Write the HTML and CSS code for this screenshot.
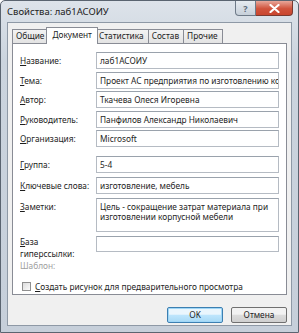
FILE: index.html
```html
<!DOCTYPE html>
<html lang="ru">

<head>
    <meta charset="UTF-8">
    <title>Свойства: лаб1АСОИУ</title>
    <link rel="stylesheet" href="styles.css">
</head>

<body>
    <div class="window">
        <div class="titlebar">
            <span class="title">Свойства: лаб1АСОИУ</span>
            <div class="caption-btns">
                <div class="cbtn help">?</div>
                <div class="cbtn close">
                    <svg width="11" height="9" viewBox="0 0 11 9">
                        <path d="M1.5 1 L9.5 8 M9.5 1 L1.5 8" stroke="#fff" stroke-width="2.2" stroke-linecap="round" />
                    </svg>
                </div>
            </div>
        </div>
        <div class="client">
            <div class="tabs">
                <div class="tab">Общие</div>
                <div class="tab active">Документ</div>
                <div class="tab">Статистика</div>
                <div class="tab">Состав</div>
                <div class="tab">Прочие</div>
            </div>
            <div class="panel">
                <div class="group">
                    <label class="lbl"><u>Н</u>азвание:</label>
                    <div class="field">лаб1АСОИУ</div>
                    <label class="lbl"><u>Т</u>ема:</label>
                    <div class="field">Проект АС предприятия по изготовлению корпусной мебели</div>
                    <label class="lbl"><u>А</u>втор:</label>
                    <div class="field">Ткачева Олеся Игоревна</div>
                    <label class="lbl"><u>Р</u>уководитель:</label>
                    <div class="field">Панфилов Александр Николаевич</div>
                    <label class="lbl"><u>О</u>рганизация:</label>
                    <div class="field">Microsoft</div>
                </div>
                <div class="group second">
                    <label class="lbl"><u>Г</u>руппа:</label>
                    <div class="field">5-4</div>
                    <label class="lbl"><u>К</u>лючевые слова:</label>
                    <div class="field">изготовление, мебель</div>
                    <label class="lbl top"><u>З</u>аметки:</label>
                    <div class="field notes">Цель - сокращение затрат материала при изготовлении корпусной мебели</div>
                    <label class="lbl two"><u>Б</u>аза<br>гиперссылки:</label>
                    <div class="field link"></div>
                    <label class="lbl disabled">Шаблон:</label>
                    <div></div>
                </div>
                <div class="check">
                    <span class="box"></span>
                    <span><u>С</u>оздать рисунок для предварительного просмотра</span>
                </div>
            </div>
            <div class="buttons">
                <div class="btn default">OK</div>
                <div class="btn">Отмена</div>
            </div>
        </div>
    </div>
</body>

</html>
```

FILE: styles.css
```css
* {
    margin: 0;
    padding: 0;
    box-sizing: border-box;
}

body {
    width: 299px;
    height: 333px;
    background: #fff;
    font-family: "Noto Sans", "Open Sans", sans-serif;
    font-size: 8.3px;
    color: #1e1e1e;
}

.window {
    width: 299px;
    height: 333px;
    border: 1px solid #5a6470;
    border-radius: 5px 5px 0 0;
    background: linear-gradient(#dde3ea, #cbd4de 60px, #c6cfda);
    padding: 0 6px 6px 6px;
    display: flex;
    flex-direction: column;
}

.titlebar {
    height: 21px;
    display: flex;
    justify-content: space-between;
    align-items: flex-start;
}

.title {
    font-size: 9.5px;
    line-height: 21px;
    color: #222;
}

.caption-btns {
    display: flex;
    margin-right: -1px;
}

.cbtn {
    height: 15px;
    border: 1px solid #6e7a88;
    border-top: none;
    display: flex;
    align-items: center;
    justify-content: center;
}

.help {
    width: 21px;
    border-radius: 0 0 0 4px;
    background: linear-gradient(#e6ebf0, #c7d0da);
    color: #5d6a78;
    font-weight: bold;
    font-size: 9px;
}

.close {
    width: 37px;
    border-left: none;
    border-color: #7a3a30;
    border-radius: 0 0 4px 0;
    background: linear-gradient(#e8a79a, #d0533c 55%, #c9462f);
}

.client {
    flex: 1;
    background: #f0f0f0;
    border: 1px solid #8e99a6;
    padding: 4px 4px 0 4px;
}

.tabs {
    display: flex;
    height: 16px;
    align-items: flex-end;
    padding-left: 1px;
}

.tab {
    height: 14px;
    padding: 0 4px 0 3px;
    border: 1px solid #898c95;
    border-bottom: none;
    margin-left: -1px;
    background: linear-gradient(#f3f3f3, #e3e3e3);
    line-height: 12px;
}

.tab.active {
    height: 17px;
    background: #fff;
    position: relative;
    z-index: 1;
    padding: 0 5px;
    margin: 0 -2px -1px -3px;
    line-height: 14px;
}

.panel {
    height: 252px;
    background: #fff;
    border: 1px solid #898c95;
    padding: 8px 7px 0 7px;
}

.group {
    display: grid;
    grid-template-columns: 76px 1fr;
    row-gap: 2.5px;
    align-items: center;
}

.group.second {
    margin-top: 9px;
    row-gap: 4px;
}

.lbl {
    line-height: 11px;
}

.lbl.top {
    align-self: start;
    padding-top: 3px;
}

.lbl.two {
    line-height: 12px;
    align-self: start;
}

.lbl.disabled {
    color: #a0a0a0;
    line-height: 12px;
    margin-top: -4px;
}

.field {
    height: 17px;
    border: 1px solid #b5bbc3;
    border-top-color: #9aa2ac;
    padding: 0 3px;
    line-height: 15px;
    white-space: nowrap;
    overflow: hidden;
}

.field.notes {
    height: 34px;
    white-space: normal;
    line-height: 10px;
    padding-top: 3px;
}

.field.link {
    height: 16px;
    align-self: start;
}

.check {
    display: flex;
    align-items: center;
    gap: 4px;
    margin-top: 9px;
    padding-left: 2px;
}

.box {
    width: 9px;
    height: 9px;
    border: 1px solid #8f8f8f;
    background: linear-gradient(135deg, #dcdcdc, #fbfbfb);
}

.buttons {
    display: flex;
    justify-content: flex-end;
    gap: 8px;
    padding: 12px 0 0 0;
}

.btn {
    width: 56px;
    height: 16px;
    border: 1px solid #707070;
    border-radius: 2px;
    background: linear-gradient(#f2f2f2 45%, #dcdcdc 50%, #cfcfcf);
    text-align: center;
    line-height: 14px;
}

.btn.default {
    border-color: #3c7fb1;
    background: linear-gradient(#eaf6fd 45%, #bee6fd 50%, #a7d9f5);
    box-shadow: inset 0 0 0 1px #9fd6f7;
}
```
